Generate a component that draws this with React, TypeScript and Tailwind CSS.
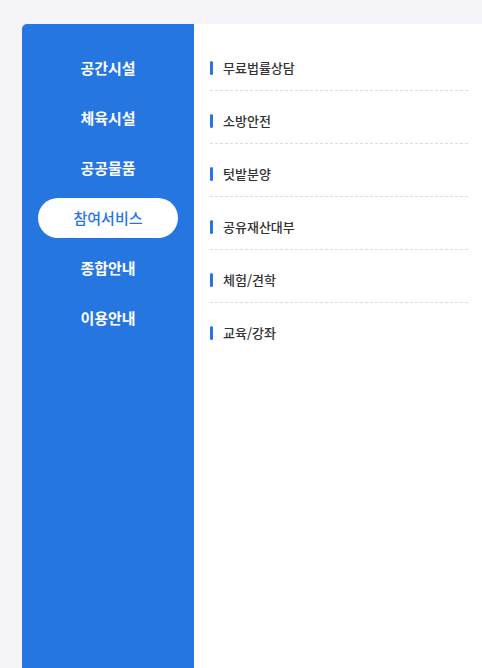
import React from "react";

const menu = ["공간시설", "체육시설", "공공물품", "참여서비스", "종합안내", "이용안내"];
const subs = ["무료법률상담", "소방안전", "텃밭분양", "공유재산대부", "체험/견학", "교육/강좌"];

export default function App() {
  const active = 3;
  return (
    <div
      className="min-h-[668px] bg-[#f5f5f9] pl-[22px] pt-[24px]"
      style={{ fontFamily: '"Noto Sans CJK KR", "Noto Sans", sans-serif' }}
    >
      <div className="flex min-h-[644px] overflow-hidden rounded-tl-[5px] bg-white">
        <nav className="flex w-[172px] shrink-0 flex-col items-center gap-[10px] bg-[#2676e1] pt-[24px]">
          {menu.map((m, i) => (
            <a
              key={m}
              className={
                i === active
                  ? "flex h-10 w-[140px] items-center justify-center rounded-full bg-white text-[15px] font-medium text-[#2676e1]"
                  : "flex h-10 w-[140px] items-center justify-center text-[15px] font-bold text-white"
              }
            >
              {m}
            </a>
          ))}
        </nav>
        <ul className="flex-1 pl-4 pr-[14px] pt-[14px]">
          {subs.map((s, i) => (
            <li
              key={s}
              className={
                i < subs.length - 1
                  ? "flex items-center gap-[10px] border-b border-dashed border-[#dcdcdc] pb-[12px] pt-[20px]"
                  : "flex items-center gap-[10px] pb-[12px] pt-[20px]"
              }
            >
              <span className="h-[14px] w-[3px] rounded-sm bg-[#2676e1]" />
              <span className="text-[13px] font-medium leading-5 text-[#333]">{s}</span>
            </li>
          ))}
        </ul>
      </div>
    </div>
  );
}
